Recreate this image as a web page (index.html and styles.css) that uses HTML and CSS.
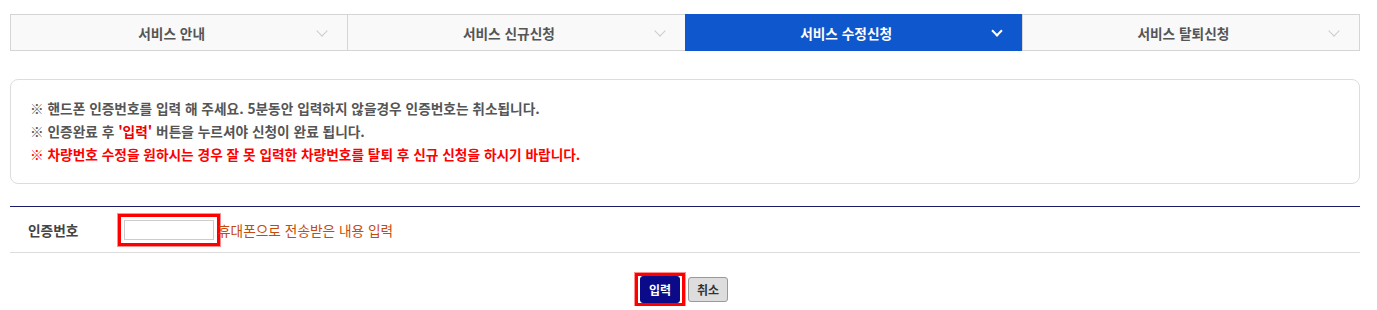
FILE: index.html
```html
<!DOCTYPE html>
<html lang="ko">
<head>
    <meta charset="UTF-8">
    <title>서비스 수정신청</title>
    <link rel="stylesheet" href="styles.css">
</head>
<body>
    <div class="container">
        <ul class="tabs">
            <li class="tab"><span>서비스 안내</span><i class="chev"></i></li>
            <li class="tab"><span>서비스 신규신청</span><i class="chev"></i></li>
            <li class="tab active"><span>서비스 수정신청</span><i class="chev"></i></li>
            <li class="tab"><span>서비스 탈퇴신청</span><i class="chev"></i></li>
        </ul>

        <div class="notice">
            <p>※ 핸드폰 인증번호를 입력 해 주세요. 5분동안 입력하지 않을경우 인증번호는 취소됩니다.</p>
            <p>※ 인증완료 후 <em>'입력'</em> 버튼을 누르셔야 신청이 완료 됩니다.</p>
            <p class="warn">※ 차량번호 수정을 원하시는 경우 잘 못 입력한 차량번호를 탈퇴 후 신규 신청을 하시기 바랍니다.</p>
        </div>

        <div class="form-row">
            <div class="label">인증번호</div>
            <div class="field">
                <span class="mark"><input type="text" class="input"></span>
                <span class="help">휴대폰으로 전송받은 내용 입력</span>
            </div>
        </div>

        <div class="buttons">
            <span class="mark btn-mark"><button class="btn primary">입력</button></span>
            <button class="btn">취소</button>
        </div>
    </div>
</body>
</html>
```

FILE: styles.css
```css
body {
    margin: 0;
    padding: 0;
    background: #fff;
    font-family: "Noto Sans CJK KR", "Noto Sans", sans-serif;
    font-size: 13.7px;
    color: #555;
}
.container {
    width: 1350px;
    margin: 14px 0 0 10px;
}
.tabs {
    display: flex;
    margin: 0;
    padding: 0;
    list-style: none;
    border: 1px solid #d5d5d5;
    background: #f9f9f9;
}
.tab {
    flex: 1;
    height: 35px;
    display: flex;
    align-items: center;
    justify-content: center;
    padding-right: 15px;
    position: relative;
    font-weight: bold;
    color: #555;
    border-left: 1px solid #d5d5d5;
}
.tab:first-child {
    border-left: 0;
}
.tab.active {
    background: #0f57cd;
    color: #fff;
    border-left-color: #0f57cd;
    margin: -1px 0;
    height: 37px;
}
.chev {
    position: absolute;
    right: 21px;
    top: 50%;
    width: 7px;
    height: 7px;
    margin-top: -6px;
    border-right: 1px solid #ccc;
    border-bottom: 1px solid #ccc;
    transform: rotate(45deg);
}
.tab.active .chev {
    border-right: 2px solid #fff;
    border-bottom: 2px solid #fff;
    width: 6px;
    height: 6px;
}
.notice {
    margin-top: 28px;
    padding: 17px 19px;
    border: 1px solid #ddd;
    border-radius: 8px;
}
.notice p {
    margin: 0;
    line-height: 23px;
    font-weight: bold;
    color: #555;
}
.notice em {
    font-style: normal;
    color: #e00;
}
.notice .warn {
    color: #f00;
}
.form-row {
    margin-top: 22px;
    display: flex;
    align-items: center;
    height: 45px;
    border-top: 1px solid #1b1b6b;
    border-bottom: 1px solid #ddd;
}
.label {
    width: 90px;
    padding-left: 18px;
    font-weight: bold;
    color: #444;
}
.field {
    display: flex;
    align-items: center;
}
.mark {
    display: inline-block;
    border: 3px solid #f00;
    box-shadow: 0 0 0 1px #ff9090;
    padding: 3px;
    line-height: 0;
}
.input {
    width: 86px;
    height: 18px;
    border: 1px solid #ccc;
    padding: 0 1px;
    margin: 0;
}
.help {
    color: #c84a0a;
    margin-left: -2px;
}
.buttons {
    margin-top: 20px;
    display: flex;
    justify-content: center;
    align-items: center;
    gap: 3px;
    padding-right: 7px;
}
.btn-mark {
    padding: 0 2px;
}
.btn {
    font-family: "Noto Sans CJK KR", sans-serif;
    font-size: 12px;
    font-weight: bold;
    height: 25px;
    padding: 0 8px;
    border: 1px solid #999;
    border-radius: 3px;
    background: #ddd;
    color: #333;
}
.btn.primary {
    height: 27px;
    padding: 0 8px;
    background: #0b0b8a;
    border: 1px solid #0b0b8a;
    color: #fff;
    margin: 0;
}
```
